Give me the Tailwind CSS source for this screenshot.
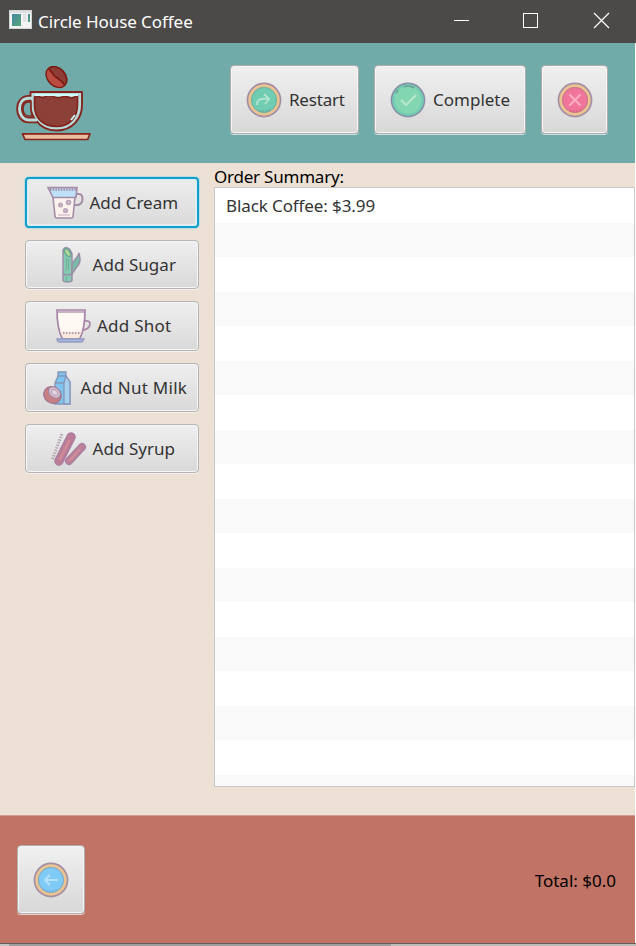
<!DOCTYPE html>
<html lang="en">
<head>
<meta charset="utf-8">
<title>Circle House Coffee</title>
<script src="https://cdn.jsdelivr.net/npm/@tailwindcss/browser@4"></script>
</head>
<body class="w-[636px] h-[946px] overflow-hidden font-['Noto_Sans',sans-serif] text-[17px] leading-6 text-[#333] bg-white">
<div class="flex flex-col w-[636px] h-[946px]">
  <!-- Title bar -->
  <header class="flex items-center h-[43px] bg-[#4c4a48] text-white pl-[9px] shrink-0">
    <svg class="w-[23px] h-[19px] -mt-[4px]" viewBox="0 0 23 19">
      <defs><linearGradient id="app" x1="0" y1="0" x2="1" y2="1"><stop offset="0" stop-color="#4485a5"/><stop offset="1" stop-color="#55a878"/></linearGradient></defs>
      <rect x=".5" y=".5" width="22" height="18" fill="#f4f4f4" stroke="#d2d5d5"/>
      <rect x="1" y="1" width="21" height="2" fill="#dedfe2"/>
      <rect x="3" y="4" width="9" height="12" fill="url(#app)"/>
      <rect x="14" y="4" width="3.500" height="8" fill="#e2e4e4"/><rect x="19" y="4" width="2" height="8" fill="url(#app)"/>
    </svg>
    <span class="ml-[6px] whitespace-nowrap tracking-[-0.06px]">Circle House Coffee</span>
    <svg class="w-[182px] h-[43px] ml-auto" viewBox="454 0 182 43" fill="none" stroke="#fff" shape-rendering="crispEdges">
      <path d="M454 20.500h15M523.500 13.500h14v14h-14z"/><path d="M594 13l15 15M609 13l-15 15" shape-rendering="auto" stroke-width="1.200"/>
    </svg>
  </header>

  <div class="flex flex-col w-[635px] h-[900px] shrink-0">
    <!-- Toolbar -->
    <div class="flex h-[120px] bg-[#70aba9] pl-[14px] pr-[27px] pt-[22px] shrink-0">
      <svg class="w-[80px] h-[78px] mt-px" viewBox="14 66 80 78" stroke-linejoin="round">
        <g transform="rotate(46 56.500 77)"><ellipse cx="56.500" cy="77" rx="11.700" ry="8.800" fill="#8d3d35" stroke="#7b1b14" stroke-width="1.700"/><path d="M45 77c4-1 7 1.500 11 .5s8-1.500 12-.5c-1 5-5 8-11.500 8S46 82 45 77z" fill="#bb4c42"/><path d="M45 77c4-1 7 1.500 11 .5s8-1.500 12-.5" fill="none" stroke="#7b1b14" stroke-width="1.700"/></g>
        <path d="M34 98.300h-5c-6.500 0-9.500 5-9.500 10.500s3 11.200 9.500 11.200h8" fill="none" stroke="#85261f" stroke-width="6.600"/>
        <path d="M30.500 92h51.500v13c0 13-9 25.500-25.500 25.500-10 0-16-4-20.500-10-4-5-5.500-9-5.500-15z" fill="#b9dcda" stroke="#81241d" stroke-width="1.900"/>
        <path d="M34 98.300h-5c-6.500 0-9.500 5-9.500 10.500s3 11.200 9.500 11.200h8" fill="none" stroke="#b9dcda" stroke-width="3"/>
        <path d="M31 102c-6-.5-8 2-8 7 0 5.500 3 7.500 9.500 7-1.500-3-2-8-1.500-14z" fill="#70aba9" stroke="#85261f" stroke-width="1.500"/>
        <path d="M34.500 97c3-3 6 2 10 0 5-2 6-2 10 0 5 2 6 0 10-.500 4-.500 6 3 9 1l4-2v9c0 13-8 22-21 22s-22-8-22-21z" fill="#8d4037" stroke="#81241d" stroke-width="1.700"/>
        <path d="M35 95h43" stroke="#d0ffff" stroke-width="1.800"/><path d="M71 120l4-5" stroke="#d0f2ef" stroke-width="2"/>
        <path d="M22.500 133.800H90l-2.300 5.700H25z" fill="#e8bda2" stroke="#85261f" stroke-width="1.700"/>
      </svg>
      <div class="flex gap-[15px] ml-auto">
        <button class="flex items-center w-[129px] h-[69px] pl-[15px] rounded-[4px] border border-[#b2adad] bg-linear-to-b from-[#f0f0f0] to-[#d8d8d8] shadow-[0_1px_0_#cce0df,inset_0_0_0_1px_#f5f5f5]">
          <svg class="w-[36px] h-[36px] shrink-0" viewBox="0 0 36 36"><circle cx="18" cy="18" r="16" fill="#71cdb2" stroke="#a58fa5" stroke-width="2.800"/><circle cx="18" cy="18" r="14.300" fill="none" stroke="#e9c491" stroke-width="2.800"/><circle cx="18" cy="18" r="12.500" fill="none" stroke="#76aaa0"/><path d="M11 23c0-6 4-7 12-6m-5-5 5 5-4 5" fill="none" stroke="#b0e4cf" stroke-width="2"/><path d="M14 30v-2m3 2v-2m3 2v-2m3 1v-2" stroke="#659f96"/></svg>
          <span class="ml-[7px] tracking-[-0.2px]">Restart</span>
        </button>
        <button class="flex items-center w-[152px] h-[69px] pl-[15px] rounded-[4px] border border-[#b2adad] bg-linear-to-b from-[#f0f0f0] to-[#d8d8d8] shadow-[0_1px_0_#cce0df,inset_0_0_0_1px_#f5f5f5]">
          <svg class="w-[36px] h-[36px] shrink-0" viewBox="0 0 36 36"><circle cx="18" cy="18" r="16.500" fill="#82d6b1" stroke="#8a91a8" stroke-width="1.800"/><circle cx="18" cy="18" r="14.700" fill="none" stroke="#70cab3" stroke-width="2"/><path d="M14 5c4-2 7-1 10 1M8 8l-2 3" fill="none" stroke="#6c9f9b" stroke-width="1.500"/><path d="m11 18 5 5 10-10" fill="none" stroke="#b9e7cc" stroke-width="2.200"/></svg>
          <span class="ml-[7px]">Complete</span>
        </button>
        <button class="flex items-center justify-center w-[67px] h-[69px] rounded-[4px] border border-[#b2adad] bg-linear-to-b from-[#f0f0f0] to-[#d8d8d8] shadow-[0_1px_0_#cce0df,inset_0_0_0_1px_#f5f5f5]">
          <svg class="w-[36px] h-[36px] shrink-0" viewBox="0 0 36 36"><circle cx="18" cy="18" r="16" fill="#f0759a" stroke="#a58fa5" stroke-width="2.800"/><circle cx="18" cy="18" r="14.300" fill="none" stroke="#e9c491" stroke-width="2.800"/><circle cx="18" cy="18" r="12.500" fill="none" stroke="#c47889"/><path d="m12.500 12.500 11 11m0-11-11 11" fill="none" stroke="#f9adc3" stroke-width="2.200"/><path d="M14 30v-2m3 2v-2m3 2v-2m3 1v-2" stroke="#d45f7f"/></svg>
        </button>
      </div>
    </div>

    <!-- Add-ons and order list -->
    <main class="flex h-[652px] bg-[#ede0d4] shrink-0">
      <div class="flex flex-col gap-3 w-[214px] pl-[25px] pr-[15px] pt-[14px] shrink-0">
        <button class="flex items-center h-[51px] shrink-0 pl-[20px] rounded-[4px] border-2 border-[#119fcf] bg-linear-to-b from-[#ededed] to-[#dadada] shadow-[0_0_1px_1px_#b6dce0,inset_0_0_0_2px_#e0edf0]">
          <svg class="w-[37px] h-[34px] shrink-0" viewBox="0 0 37 34" fill="none" stroke="#a58ba6" stroke-width="1.600"><path d="M29 8h3c3 0 3.500 2 3.500 5s-2 6-5 6H28" stroke-width="2"/><path d="M6 11h22l-2 20q0 1-2 1H10q-2 0-2-2z" fill="#fbf1ed"/><path d="M1 1.500h29l-1 10H6z" fill="#bfe1f8"/><path d="M3 3.500h26" stroke-width="2.500" stroke-dasharray="1.500 1.200"/><g stroke="#baa4ba" fill="#d1bccb"><circle cx="13.500" cy="19" r="1.700"/><circle cx="21.500" cy="16.500" r="2"/><circle cx="18.500" cy="24.500" r="1.800"/></g><path d="M11 29h12" stroke="#d9c4cf"/></svg>
          <span class="ml-[5.500px] whitespace-nowrap">Add Cream</span>
        </button>
        <button class="flex items-center h-[49px] shrink-0 pl-[36px] rounded-[4px] border border-[#b5b5b5] bg-linear-to-b from-[#efefef] to-[#d9d9d9] shadow-[0_1px_0_#f6efe9,inset_0_0_0_1px_#f5f5f5]">
          <svg class="w-[19px] h-[38px] shrink-0" viewBox="0 0 19 38" stroke="#9c8fa8" stroke-width="1.500"><path d="M1 4c2-4 7-3 9 4v26q0 2-4.500 2T1 34z" fill="#85c9b4"/><path d="M2 4c3-3 6 0 7 6-3 2-6-2-7-6z" fill="#b4da9c" stroke="#6aa791"/><path d="M10 28V19c1-5 6-7 7-12 2 8 1 11-3 15z" fill="#78bba8"/><path d="M1 28q4 2 9 0" fill="none"/><path d="M4.500 12v13m2-12v11m-2 7v4" stroke="#6db096" stroke-width="1" fill="none"/></svg>
          <span class="ml-[11.500px] whitespace-nowrap tracking-[0.05px]">Add Sugar</span>
        </button>
        <button class="flex items-center h-[50px] shrink-0 pl-[30px] rounded-[4px] border border-[#b5b5b5] bg-linear-to-b from-[#efefef] to-[#d9d9d9] shadow-[0_1px_0_#f6efe9,inset_0_0_0_1px_#f5f5f5]">
          <svg class="w-[35px] h-[34px] shrink-0" viewBox="0 0 35 34" fill="none" stroke="#a684a6" stroke-width="1.700"><path d="M28 12q6-1 6 3c0 4-4 6-8 6"/><path d="M1 1h28c0 10-1 20-5 28H6C2 21 1 13 1 1z" fill="#fff8f3"/><path d="M4 22q11 2 22 0l-3 7H7z" fill="#fbe8dc" stroke="none"/><path d="M7 24h17" stroke="#b79ab0" stroke-dasharray="1.500 1.500" stroke-width="2"/><path d="M2 3h26" stroke="#b49ab4" stroke-width="1.500"/><path d="M1 30h27q-1 3-3 3H4q-3 0-3-3z" fill="#a2b9e3" stroke="#979ac0" stroke-width="1.300"/></svg>
          <span class="ml-[6px] whitespace-nowrap tracking-[0.25px]">Add Shot</span>
        </button>
        <button class="flex items-center h-[49px] shrink-0 pl-[17px] rounded-[4px] border border-[#b5b5b5] bg-linear-to-b from-[#efefef] to-[#d9d9d9] shadow-[0_1px_0_#f6efe9,inset_0_0_0_1px_#f5f5f5]">
          <svg class="w-[28px] h-[34px] shrink-0" viewBox="0 0 28 34" stroke="#8795b9" stroke-width="1.300"><path d="M15 1h8v4l4 6v22H12V12l3-7z" fill="#7ec4ef"/><path d="M21 12l2-7 4 6v22h-6z" fill="#a6d0ee"/><path d="M15 5h8M12 12h9" fill="none"/><ellipse cx="9.500" cy="24" rx="9" ry="8" transform="rotate(35 9.500 24)" fill="#c77f82" stroke="#a37591"/><ellipse cx="11.500" cy="21.500" rx="6.500" ry="5" transform="rotate(40 11.500 21.500)" fill="#d7c5d6" stroke="#a689a3"/><ellipse cx="11.500" cy="21.500" rx="3.500" ry="2.500" transform="rotate(40 11.500 21.500)" fill="#e2d4df" stroke="#ba9bb1" stroke-width="1"/></svg>
          <span class="ml-[9.500px] whitespace-nowrap tracking-[0.27px]">Add Nut Milk</span>
        </button>
        <button class="flex items-center h-[49px] shrink-0 pl-[25px] rounded-[4px] border border-[#b5b5b5] bg-linear-to-b from-[#efefef] to-[#d9d9d9] shadow-[0_1px_0_#f6efe9,inset_0_0_0_1px_#f5f5f5]">
          <svg class="w-[36px] h-[35px] shrink-0" viewBox="0 0 36 35" fill="none" stroke-linecap="round"><path d="m8 30 12-24" stroke="#aa7fa0" stroke-width="9.500"/><path d="m8 30 12-24" stroke="#bc7c98" stroke-width="6.500"/><path d="m9 28 9-18" stroke="#cf8c95" stroke-width="2.500"/><path d="m18 30 13-14" stroke="#aa7fa0" stroke-width="8"/><path d="m18 30 13-14" stroke="#bf8098" stroke-width="5"/><path d="m19 29 9-10" stroke="#cf8f98" stroke-width="2"/><path d="M1.500 28 11 3" stroke="#b4a1b0" stroke-width="3" stroke-linecap="butt" stroke-dasharray="1.400 1.400"/></svg>
          <span class="ml-[5.500px] whitespace-nowrap tracking-[0.05px]">Add Syrup</span>
        </button>
      </div>
      <section class="flex flex-col w-[421px]">
        <h2 class="h-[24px] leading-[27px] text-black"><span class="whitespace-nowrap tracking-[-0.22px]">Order Summary:</span></h2>
        <div class="flex flex-col h-[600px] border border-[#c8c8c8] bg-white overflow-hidden">
          <div class="flex items-center h-[35px] shrink-0 pl-[11px]"><span class="whitespace-nowrap tracking-[-0.1px]">Black Coffee: $3.99</span></div>
          <div class="h-[563px] bg-[repeating-linear-gradient(to_bottom,#f9f9f9_0,#f9f9f9_34.5px,#fff_34.5px,#fff_69px)]"></div>
        </div>
      </section>
    </main>

    <!-- Footer -->
    <footer class="flex items-start justify-between h-[128px] bg-[#c17465] border-t border-[#cf9c8f] pl-[17px] pr-[19px] pt-[29px] shrink-0">
      <button class="flex items-center justify-center w-[68px] h-[69px] rounded-[4px] border border-[#b2adad] bg-linear-to-b from-[#f0f0f0] to-[#d8d8d8] shadow-[0_1px_0_#e8cfcb,inset_0_0_0_1px_#f5f5f5]">
        <svg class="w-[36px] h-[36px] shrink-0" viewBox="0 0 36 36"><circle cx="18" cy="18" r="16" fill="#80caf7" stroke="#a58fa5" stroke-width="2.800"/><circle cx="18" cy="18" r="14.300" fill="none" stroke="#e9c491" stroke-width="2.800"/><circle cx="18" cy="18" r="12.500" fill="none" stroke="#84a9bd"/><path d="M25 18H12m5-5-5 5 5 5" fill="none" stroke="#b5e1fa" stroke-width="2"/><path d="M11 29v-2m3 3v-2m3 2v-2m3 2v-2m3 1v-2" stroke="#6ba6cb"/></svg>
      </button>
      <span class="mt-[24px] text-black whitespace-nowrap">Total: $0.0</span>
    </footer>
  </div>
  <div class="h-px bg-[#665b57] shrink-0"></div>
  <div class="flex h-[2px] shrink-0"><div class="w-[9px] bg-[#c4c4c4]"></div><div class="w-[382px] bg-[#9e9e9e]"></div><div class="grow bg-[#bdbdb8]"></div></div>
</div>
</body>
</html>
